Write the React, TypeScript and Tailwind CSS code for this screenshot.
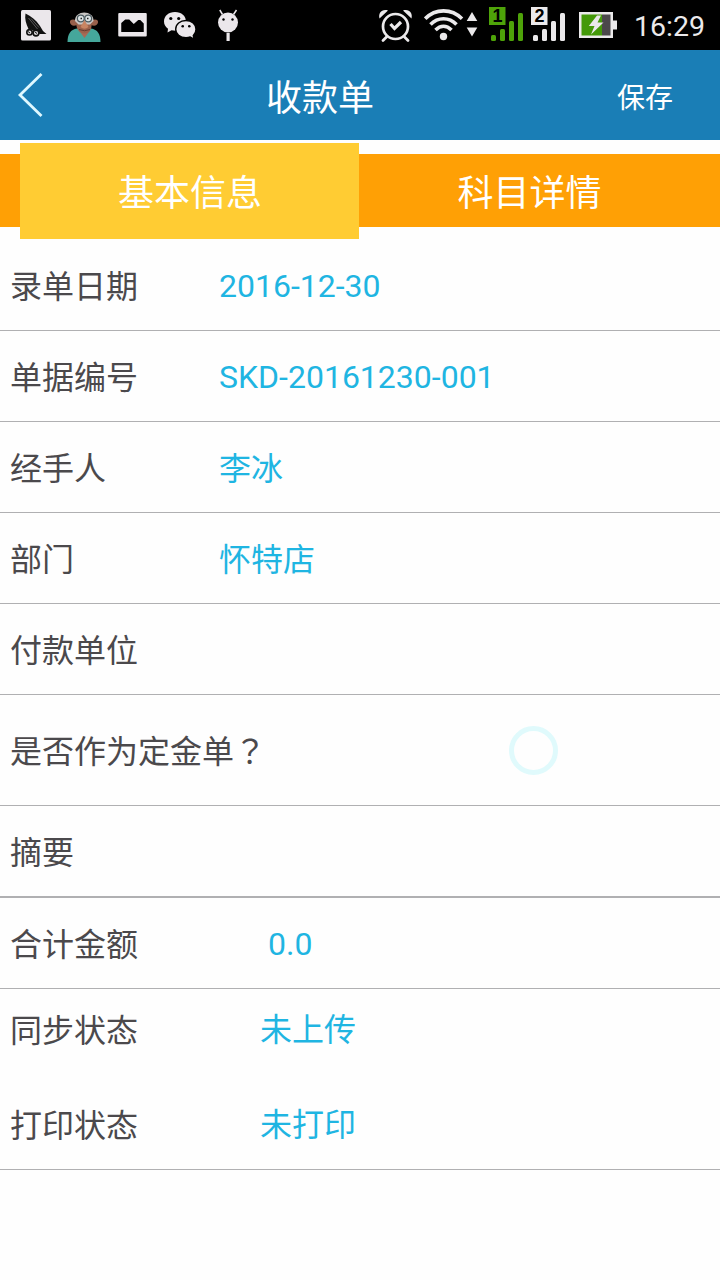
import type { ReactNode } from 'react';
import clsx from 'clsx';

const textFont = "font-[Roboto,'Noto_Sans_CJK_SC',sans-serif]";

const rows = [
  { label: '录单日期', value: '2016-12-30' },
  { label: '单据编号', value: 'SKD-20161230-001' },
  { label: '经手人', value: '李冰' },
  { label: '部门', value: '怀特店' },
  { label: '付款单位', value: '' },
];

function Signal({ sim, active }: { sim: string; active?: boolean }) {
  return (
    <div className="relative w-[35px] h-[50px]">
      <svg viewBox="0 0 35 50" className={clsx('w-[35px] h-[50px]', active ? 'text-[#4ea309]' : 'text-[#ebe9eb]')} fill="currentColor">
        <path d="M0 7H16.5V25H0Z" />
        <rect x="2" y="35" width="5" height="6" rx="1.5" />
        <rect x="11" y="29" width="5" height="12" rx="1.5" />
        <rect x="20" y="21" width="5" height="20" rx="1.5" />
        <rect x="29" y="13" width="5" height="28" rx="1.5" />
      </svg>
      <span className="absolute left-0 top-[7px] w-[17px] text-center text-[18px] leading-[18px] text-black font-['Liberation_Sans',sans-serif] font-semibold">{sim}</span>
    </div>
  );
}

function StatusBar() {
  return (
    <div className="flex items-center h-[50px] bg-black text-[#ebe9eb]">
      {/* Notifications */}
      <svg viewBox="21 0 30 50" className="ml-[21px] w-[30px] h-[50px]">
        <rect x="21" y="10" width="30" height="30.5" rx="1.5" fill="#ebe7eb" />
        <path d="M25.5 13.5C31 16 36 20 40 26L43 31L46.500 34H39.500C38 31 33.500 30.500 28.500 29C26 23.500 24.500 19 25.500 13.500Z" fill="#111" />
        <path d="M28.500 18l9 11M31 18.500l8 9" stroke="#8b888b" strokeWidth=".6" />
        <g fill="#d8d5d8" stroke="#111" strokeWidth="1.600">
          <circle cx="29.500" cy="32.300" r="2.700" />
          <circle cx="36" cy="33" r="2.900" />
        </g>
        <path d="M28 31.500l2 1.500M35 32l2 1.500" stroke="#111" />
      </svg>
      <svg viewBox="67 0 34 50" className="ml-4 w-[34px] h-[50px]">
        <path d="M67.500 42C67.500 34 70.500 29.500 77 28.500H91C97.500 29.500 100.500 34 100.500 42Z" fill="#45a79b" />
        <path d="M78.500 30L84.500 38L90.500 30Z" fill="#a86b55" />
        <path d="M76 20C72 18.500 69.500 20 70 22.500C70.500 25.500 73.500 26.500 77 25ZM92 20C96 18.500 98.500 20 98 22.500C97.500 25.500 94.500 26.500 91 25Z" fill="#98604b" />
        <path d="M75.500 19H92.500L91.500 26C91.500 30.500 88 33.500 84.500 33.500S77 30.500 76.500 26Z" fill="#9c624c" />
        <path d="M75 21C74.500 9.500 94 9.500 93.500 21L90 24.500H78.500Z" fill="#c9c6c4" />
        <g fill="#dce3e4" stroke="#4d5c62" strokeWidth="1.200">
          <circle cx="80.800" cy="18.500" r="3.400" />
          <circle cx="88.200" cy="18.500" r="3.400" />
        </g>
        <path d="M80.500 18.500h1.500M87 18.500h1.500" stroke="#222" strokeWidth="1.500" />
        <path d="M84.500 20L80.500 27Q84.500 30.500 88.500 27Z" fill="#c98563" />
        <path d="M79 29.500Q84.500 32 90 29.500" stroke="#683d31" fill="none" />
      </svg>
      <svg viewBox="118 0 28.500 50" className="ml-[17px] w-[29px] h-[50px]">
        <rect x="118" y="13" width="28.500" height="23.500" rx="1" fill="#ebe7eb" />
        <path d="M121 32V23L125 19.500H129L133.500 24L138 20H140L143.500 23.500V32Z" fill="#000" />
      </svg>
      <svg viewBox="163 0 34 50" className="ml-4 w-[34px] h-[50px]">
        <path d="M175 12C168.500 12 164 16 164 21.500C164 24.500 165.500 27 168 28.700L167.500 32.500L171.500 30.300C181 32 186 27.500 186 21.500C186 16 181.500 12 175 12Z" fill="#ebe7eb" />
        <path d="M186 20.500C180 20.500 175.700 24.200 175.700 29.200C175.700 34 180 37.700 186 37.700C187.500 37.700 189 37.500 190.200 37L194 39L193.300 35.500C195 34 196 31.700 196 29.200C196 24.200 191.700 20.500 186 20.500Z" fill="#ebe7eb" stroke="#000" strokeWidth="1.400" />
        <g fill="#000">
          <circle cx="170.800" cy="18.500" r="1.600" />
          <circle cx="178.700" cy="18.500" r="1.600" />
          <circle cx="182.700" cy="26.300" r="1.300" />
          <circle cx="189.300" cy="26.300" r="1.300" />
        </g>
      </svg>
      <svg viewBox="217 0 22 50" className="ml-[20px] w-[22px] h-[50px]">
        <path d="M219.800 10L222.500 14.500M236.500 10L233.500 14.500" stroke="#ebe7eb" strokeWidth="1.500" />
        <circle cx="228" cy="22.500" r="10" fill="#ebe7eb" />
        <circle cx="223.500" cy="19.500" r="1.200" />
        <circle cx="232.500" cy="19.500" r="1.200" />
        <path d="M226.500 33h3.200v8h-3.200z" fill="#ebe7eb" />
      </svg>

      {/* System */}
      <svg viewBox="378 0 35 50" className="ml-[139px] w-[35px] h-[50px]" fill="none" stroke="currentColor">
        <circle cx="395.500" cy="26.500" r="12.500" strokeWidth="2.700" />
        <path d="M390.500 24L394.500 28.500L401 22" strokeWidth="3.200" />
        <path d="M386.500 37L383 40.500M404.500 37L408 40.500" strokeWidth="2.800" strokeLinecap="round" />
        <path d="M379.500 18.500C378 13 382 8.500 388 10.500ZM411.500 18.500C413 13 409 8.500 403 10.500Z" fill="currentColor" stroke="none" />
      </svg>
      <svg viewBox="424 0 54 50" className="ml-[11px] w-[54px] h-[50px]" fill="none" stroke="currentColor" strokeWidth="3.600">
        <path d="M425.200 18.700C435.500 8.200 451.500 8.200 462 18.700" />
        <path d="M430.500 24.500C438 16.800 449 16.800 456.500 24.500" />
        <path d="M435.500 30C440.500 25 446.500 25 451.500 30" />
        <circle cx="443.500" cy="36.500" r="3.700" fill="currentColor" stroke="none" />
        <path d="M472 12L477.300 21H466.700ZM472 36.500L466.700 27.500H477.300Z" fill="currentColor" stroke="none" />
      </svg>
      <div className="flex gap-[7px] ml-[11px]">
        <Signal sim="1" active />
        <Signal sim="2" />
      </div>
      <svg viewBox="579 0 38 50" className="ml-[13px] w-[38px] h-[50px]">
        <path d="M579 12H613V20.500H617V29.500H613V38H579Z" fill="#ebe9eb" />
        <path d="M581.500 14.500H602V35.500H581.500Z" fill="#449909" />
        <path d="M602 14.500H610.500V35.500H602Z" fill="#4b484b" />
        <path d="M597 15.500L588.800 26H594.500L591 34.500L603.500 22.500H597.500L601 15.500Z" fill="#ebe9eb" />
      </svg>
      <span className="ml-[17px] text-[28.500px] leading-[50px] mt-[3px]">16:29</span>
    </div>
  );
}

function Row({ label, children, className }: { label: string; children?: ReactNode; className?: string }) {
  return (
    <div className={clsx('flex items-center border-[#b0b0b2] pl-[10px]', className)}>
      <span className="min-w-[209px] text-[#4b494c]">{label}</span>
      {children}
    </div>
  );
}

export default function App() {
  return (
    <div className={clsx('w-[720px] h-[1280px] bg-[#fefefe] overflow-hidden', textFont)}>
      <StatusBar />

      {/* Title bar */}
      <header className="flex items-center h-[90px] bg-[#1a7eb6] text-white">
        <button className="ml-[18px]" aria-label="返回">
          <svg viewBox="0 0 26 44" className="w-[26px] h-[44px]" fill="none" stroke="#dff8ff" strokeWidth="2.800">
            <path d="M23.500 1L2 22L23.500 43" />
          </svg>
        </button>
        <h1 className="ml-[222px] pt-[7px] text-[36px] leading-[48px]">收款单</h1>
        <button className="ml-[243px] pt-[7px] text-[28px] leading-[40px]">保存</button>
      </header>

      {/* Tabs */}
      <nav className="flex items-start h-[100px] pt-[3px] text-[36px] leading-[48px] text-white">
        <div className="w-5 h-[73px] mt-[10.500px] bg-[#ffa005]" />
        <button className="w-[339px] h-[96px] pt-[5px] pl-px bg-[#ffcc33]">基本信息</button>
        <button className="flex-1 h-[73px] mt-[10.500px] pt-[7px] pr-[20px] bg-[#ffa005]">科目详情</button>
      </nav>

      <main className="text-[32px] leading-[40px] text-[#1fb5e2]">
        {rows.map(row => (
          <Row key={row.label} label={row.label} className="h-[91px] pt-[4px] border-b">
            <span className={clsx(/^[\w-]+$/.test(row.value) && '-mt-[2px]')}>{row.value}</span>
          </Row>
        ))}
        <Row label="是否作为定金单？" className="h-[111px] pt-[4px] border-b font-[Roboto,'Noto_Sans_CJK_TC',sans-serif]">
          <span className="ml-[243px] -mt-[4px] size-[49px] rounded-full border-[5px] border-[#e0fafc]" />
        </Row>
        <Row label="摘要" className="h-[92px] pt-[4px] border-b-2" />
        <Row label="合计金额" className="h-[91px] pt-[4px] border-b">
          <span className="ml-[49px] -mt-[2px]">0.0</span>
        </Row>
        <Row label="同步状态" className="h-[83px]">
          <span className="ml-[41px] -mt-px">未上传</span>
        </Row>
        <Row label="打印状态" className="h-[98px] pt-[10px] border-b">
          <span className="ml-[41px] -mt-px">未打印</span>
        </Row>
      </main>
    </div>
  );
}
